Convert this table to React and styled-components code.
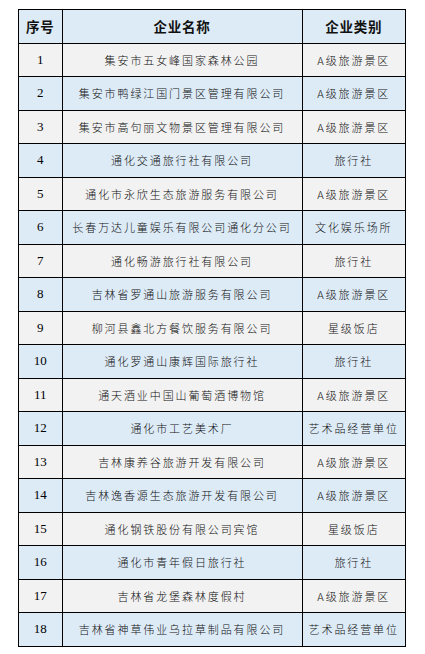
import React from 'react';
import styled, { createGlobalStyle } from 'styled-components';

const rows = [
  ['集安市五女峰国家森林公园', 'A级旅游景区'],
  ['集安市鸭绿江国门景区管理有限公司', 'A级旅游景区'],
  ['集安市高句丽文物景区管理有限公司', 'A级旅游景区'],
  ['通化交通旅行社有限公司', '旅行社'],
  ['通化市永欣生态旅游服务有限公司', 'A级旅游景区'],
  ['长春万达儿童娱乐有限公司通化分公司', '文化娱乐场所'],
  ['通化畅游旅行社有限公司', '旅行社'],
  ['吉林省罗通山旅游服务有限公司', 'A级旅游景区'],
  ['柳河县鑫北方餐饮服务有限公司', '星级饭店'],
  ['通化罗通山康辉国际旅行社', '旅行社'],
  ['通天酒业中国山葡萄酒博物馆', 'A级旅游景区'],
  ['通化市工艺美术厂', '艺术品经营单位'],
  ['吉林康养谷旅游开发有限公司', 'A级旅游景区'],
  ['吉林逸香源生态旅游开发有限公司', 'A级旅游景区'],
  ['通化钢铁股份有限公司宾馆', '星级饭店'],
  ['通化市青年假日旅行社', '旅行社'],
  ['吉林省龙堡森林度假村', 'A级旅游景区'],
  ['吉林省神草伟业乌拉草制品有限公司', '艺术品经营单位'],
];

const GlobalStyle = createGlobalStyle`
  body {
    margin: 0;
    background: #ffffff;
  }
`;

const Page = styled.div`
  padding: 9px 0 0 18px;
`;

const Table = styled.table`
  border-collapse: collapse;
  table-layout: fixed;
  width: 387px;
  border: 1.5px solid #000;
`;

const Cell = styled.td`
  height: 32.5px;
  padding: 0;
  border: 1px solid #000;
  text-align: center;
  vertical-align: middle;
  background: ${(p) => (p.$alt ? '#ddebf7' : '#f2f2f2')};
  color: #111;
  font-family: "Noto Sans CJK SC", sans-serif;
  font-weight: 300;
  font-size: 11px;
  letter-spacing: 1.9px;
  white-space: nowrap;
  overflow: hidden;
`;

const NumCell = styled(Cell)`
  font-family: "Liberation Serif", serif;
  font-weight: 400;
  font-size: 13px;
  letter-spacing: 0;
  color: #000;
`;

const HeadCell = styled.th`
  height: 32.5px;
  padding: 0;
  border: 1px solid #000;
  background: #ddebf7;
  color: #111;
  font-family: "Noto Sans CJK SC", sans-serif;
  font-weight: 700;
  font-size: 13.5px;
  letter-spacing: 0.8px;
  text-align: center;
`;

export default function App() {
  return (
    <Page>
      <GlobalStyle />
      <Table>
        <colgroup>
          <col style={{ width: 43.5 }} />
          <col style={{ width: 240 }} />
          <col style={{ width: 103.5 }} />
        </colgroup>
        <thead>
          <tr>
            <HeadCell>序号</HeadCell>
            <HeadCell>企业名称</HeadCell>
            <HeadCell>企业类别</HeadCell>
          </tr>
        </thead>
        <tbody>
          {rows.map(([name, kind], i) => {
            const alt = i % 2 === 1;
            return (
              <tr key={i}>
                <NumCell $alt={alt}>{i + 1}</NumCell>
                <Cell $alt={alt}>{name}</Cell>
                <Cell $alt={alt}>{kind}</Cell>
              </tr>
            );
          })}
        </tbody>
      </Table>
    </Page>
  );
}
